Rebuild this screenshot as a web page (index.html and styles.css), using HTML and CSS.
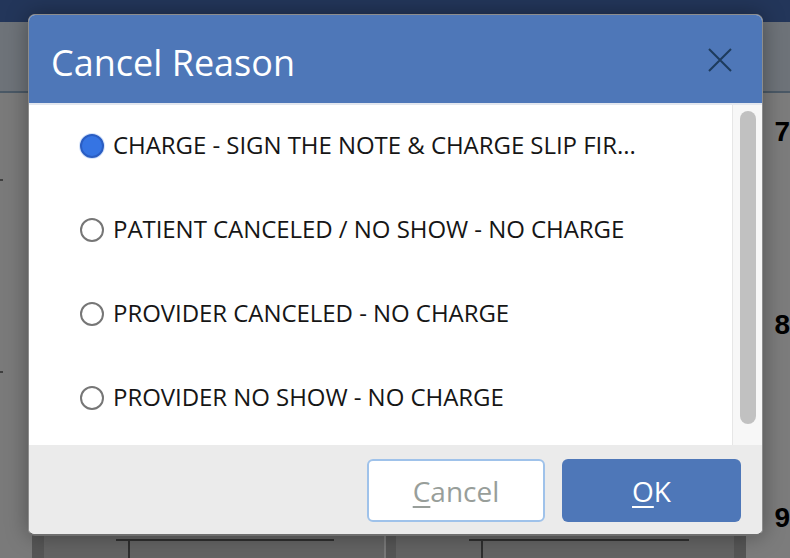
FILE: index.html
```html
<!DOCTYPE html>
<html>
<head>
<meta charset="utf-8">
<link rel="stylesheet" href="styles.css">
</head>
<body>
<div class="page">
  <div class="topbar"></div>
  <div class="toolbar"></div>
  <div class="main">
    <div class="gutter"><span class="tick"></span><span class="tick"></span></div>
    <div class="col">
      <div class="col-foot"><span class="bar"><span class="stem"></span></span></div>
    </div>
    <div class="col col-2">
      <div class="col-foot"><span class="bar bar-2"><span class="stem stem-2"></span></span></div>
    </div>
    <div class="col col-days">
      <span class="day">7</span>
      <span class="day">8</span>
      <span class="day">9</span>
    </div>
  </div>
</div>

<div class="dialog" role="dialog">
  <div class="dlg-head">
    <span class="dlg-title">Cancel Reason</span>
    <svg class="close" width="24" height="24" viewBox="0 0 24 24"><path d="M1 1 L23 23 M23 1 L1 23" stroke="#1d3b5c" stroke-width="2" fill="none"/></svg>
  </div>
  <div class="dlg-body">
    <ul class="options">
      <li class="option"><span class="radio checked"></span><span class="label">CHARGE - SIGN THE NOTE &amp; CHARGE SLIP FIR...</span></li>
      <li class="option"><span class="radio"></span><span class="label">PATIENT CANCELED / NO SHOW - NO CHARGE</span></li>
      <li class="option"><span class="radio"></span><span class="label">PROVIDER CANCELED - NO CHARGE</span></li>
      <li class="option"><span class="radio"></span><span class="label">PROVIDER NO SHOW - NO CHARGE</span></li>
    </ul>
    <div class="scroll"><div class="thumb"></div></div>
  </div>
  <div class="dlg-foot">
    <button class="btn btn-cancel"><u>C</u>ancel</button>
    <button class="btn btn-ok"><u>O</u>K</button>
  </div>
</div>
</body>
</html>
```

FILE: styles.css
```css
html, body {
  margin: 0;
  padding: 0;
}
body {
  width: 790px;
  height: 558px;
  overflow: hidden;
  position: relative;
  background: #7a7a7a;
  font-family: "Open Sans", "Liberation Sans", sans-serif;
}
.page {
  display: flex;
  flex-direction: column;
  height: 558px;
  overflow: hidden;
}
.topbar {
  flex: none;
  height: 22px;
  background: #23365a;
}
.toolbar {
  flex: none;
  height: 69px;
  background: #6e7379;
  border-bottom: 2px solid #4b5966;
}
.main {
  flex: 1;
  min-height: 0;
  overflow: hidden;
  display: flex;
}
.gutter {
  width: 33px;
  background: #7a7a7a;
  display: flex;
  flex-direction: column;
  padding-top: 86px;
  gap: 190px;
}
.tick {
  display: block;
  width: 3px;
  height: 2px;
  background: #3f3f3f;
}
.col {
  width: 347px;
  border-left: 12px solid #565656;
  background: #646464;
  display: flex;
  flex-direction: column;
}
.col-2 {
  width: 346px;
  border-left-width: 10px;
  margin-left: 2px;
}
.col-foot {
  margin-top: auto;
  height: 19px;
}
.bar {
  display: block;
  margin-left: 72px;
  width: 218px;
  height: 0;
  border-top: 2px solid #2f2f2f;
  position: relative;
}
.bar-2 {
  margin-left: 73px;
  width: 220px;
}
.stem {
  position: absolute;
  left: 12px;
  top: -2px;
  width: 2px;
  height: 22px;
  background: #2f2f2f;
}
.col-days {
  flex: 1;
  width: auto;
  border-left-width: 12px;
  background: #7c7c7c;
  padding: 25px 0 0 28px;
  display: block;
}
.day {
  display: block;
  height: 193px;
  font-family: "Liberation Sans", sans-serif;
  font-weight: bold;
  font-size: 28px;
  line-height: 28px;
  color: #000;
}

/* dialog */
.dialog {
  position: absolute;
  left: 28px;
  top: 14px;
  width: 733px;
  border: 1px solid #8d8d8d;
  border-bottom-width: 2px;
  border-bottom-color: #6f6f6f;
  border-radius: 7px;
  overflow: hidden;
  background: #fff;
  box-shadow: 0 0 22px rgba(0, 0, 0, 0.35);
  display: flex;
  flex-direction: column;
}
.dlg-head {
  height: 88px;
  background: #4e77b8;
  border-bottom: 2px solid #e3e7ee;
  display: flex;
  align-items: center;
  justify-content: space-between;
  padding: 0 30px 0 22px;
}
.dlg-title {
  color: #fff;
  font-size: 36px;
  line-height: 40px;
  margin-top: 8px;
}
.close {
  display: block;
  margin-top: 1px;
}
.dlg-body {
  height: 340px;
  display: flex;
}
.options {
  flex: 1;
  list-style: none;
  margin: -1px 0 0 0;
  padding: 0;
}
.option {
  height: 84px;
  display: flex;
  align-items: center;
  gap: 9px;
  padding-left: 51px;
  font-size: 24px;
  color: #161616;
  white-space: nowrap;
}
.label {
  margin-bottom: 4px;
  letter-spacing: -0.05px;
}
.radio {
  flex: none;
  width: 24px;
  height: 24px;
  box-sizing: border-box;
  border-radius: 50%;
  border: 2px solid #767676;
  background: #fff;
}
.radio.checked {
  background: #3574e3;
  border-color: #2a5dc2;
  box-shadow: 0 0 0 1px #d5e3fa;
}
.scroll {
  width: 22px;
  background: #f7f7f7;
  border-left: 1px solid #e6e6e6;
  padding: 6px 0 0 7px;
}
.thumb {
  width: 16px;
  height: 313px;
  border-radius: 8px;
  background: #c1c1c1;
}
.dlg-foot {
  height: 89px;
  box-sizing: border-box;
  background: #ebebeb;
  display: flex;
  justify-content: flex-end;
  align-items: center;
  gap: 17px;
  padding: 2px 21px 0 0;
}
.btn {
  width: 178px;
  height: 63px;
  box-sizing: border-box;
  border-radius: 6px;
  font-family: "Open Sans", "Liberation Sans", sans-serif;
  font-size: 28px;
  display: flex;
  align-items: center;
  justify-content: center;
  padding: 0;
}
.btn u {
  text-decoration-thickness: 2px;
  text-underline-offset: 4px;
}
.btn-cancel {
  background: #fff;
  border: 2px solid #9fc2ea;
  color: #989e9a;
}
.btn-ok {
  width: 179px;
  background: #4e77b8;
  border: none;
  color: #fff;
}
```
